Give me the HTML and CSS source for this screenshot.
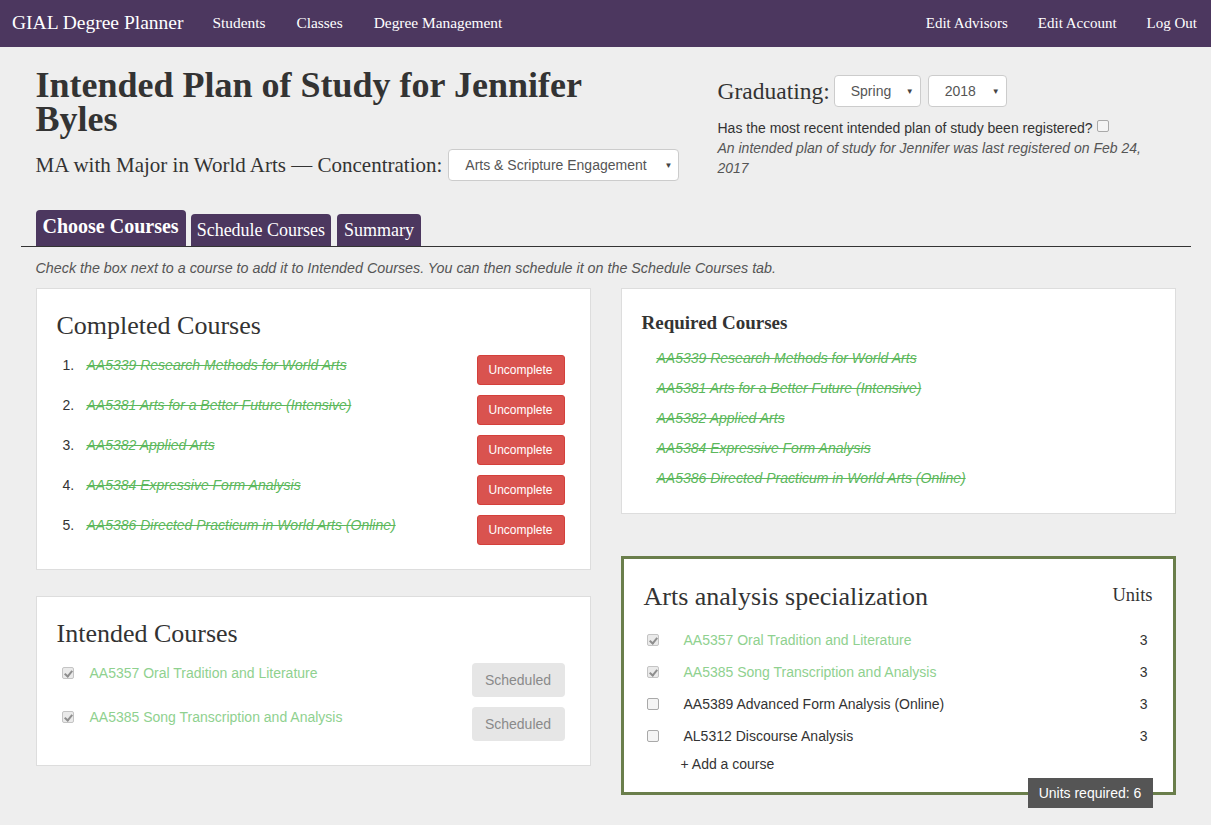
FILE: index.html
```html
<!DOCTYPE html>
<html>
<head>
<meta charset="utf-8">
<link rel="stylesheet" href="styles.css">
</head>
<body>
<nav class="navbar">
  <div class="nav-left">
    <a class="brand">GIAL Degree Planner</a>
    <a class="nav-link">Students</a>
    <a class="nav-link">Classes</a>
    <a class="nav-link">Degree Management</a>
  </div>
  <div class="nav-right">
    <a class="nav-link">Edit Advisors</a>
    <a class="nav-link">Edit Account</a>
    <a class="nav-link">Log Out</a>
  </div>
</nav>

<div class="container">
  <div class="header-row">
    <div class="head-left">
      <h1 class="title">Intended Plan of Study for Jennifer Byles</h1>
      <div class="degree">
        <span class="degree-text">MA with Major in World Arts — Concentration:</span>
        <div class="select select-conc"><span>Arts &amp; Scripture Engagement</span><span class="caret">▼</span></div>
      </div>
    </div>
    <div class="head-right">
      <div class="grad">
        <span class="grad-label">Graduating:</span>
        <div class="select select-term"><span>Spring</span><span class="caret">▼</span></div>
        <div class="select select-year"><span>2018</span><span class="caret">▼</span></div>
      </div>
      <p class="reg-q">Has the most recent intended plan of study been registered? <span class="cb cb-plain cb-inline"></span></p>
      <p class="reg-note">An intended plan of study for Jennifer was last registered on Feb 24, 2017</p>
    </div>
  </div>

  <ul class="tabs">
    <li class="tab active">Choose Courses</li>
    <li class="tab">Schedule Courses</li>
    <li class="tab">Summary</li>
  </ul>

  <p class="instructions">Check the box next to a course to add it to Intended Courses. You can then schedule it on the Schedule Courses tab.</p>

  <div class="main-row">
    <div class="col">
      <section class="panel panel-completed">
        <h2 class="panel-title">Completed Courses</h2>
        <ol class="completed-list">
          <li><span class="num">1.</span><span class="done">AA5339 Research Methods for World Arts</span><button class="btn-red">Uncomplete</button></li>
          <li><span class="num">2.</span><span class="done">AA5381 Arts for a Better Future (Intensive)</span><button class="btn-red">Uncomplete</button></li>
          <li><span class="num">3.</span><span class="done">AA5382 Applied Arts</span><button class="btn-red">Uncomplete</button></li>
          <li><span class="num">4.</span><span class="done">AA5384 Expressive Form Analysis</span><button class="btn-red">Uncomplete</button></li>
          <li><span class="num">5.</span><span class="done">AA5386 Directed Practicum in World Arts (Online)</span><button class="btn-red">Uncomplete</button></li>
        </ol>
      </section>

      <section class="panel panel-intended">
        <h2 class="panel-title">Intended Courses</h2>
        <ul class="intended-list">
          <li><span class="cb cb-checked"></span><span class="planned">AA5357 Oral Tradition and Literature</span><button class="btn-gray">Scheduled</button></li>
          <li><span class="cb cb-checked"></span><span class="planned">AA5385 Song Transcription and Analysis</span><button class="btn-gray">Scheduled</button></li>
        </ul>
      </section>
    </div>

    <div class="col">
      <section class="panel panel-required">
        <h3 class="req-title">Required Courses</h3>
        <ul class="req-list">
          <li class="done">AA5339 Research Methods for World Arts</li>
          <li class="done">AA5381 Arts for a Better Future (Intensive)</li>
          <li class="done">AA5382 Applied Arts</li>
          <li class="done">AA5384 Expressive Form Analysis</li>
          <li class="done">AA5386 Directed Practicum in World Arts (Online)</li>
        </ul>
      </section>

      <section class="panel panel-spec">
        <div class="spec-head">
          <h2 class="panel-title">Arts analysis specialization</h2>
          <span class="units-label">Units</span>
        </div>
        <ul class="spec-list">
          <li><span class="cb cb-checked"></span><span class="planned">AA5357 Oral Tradition and Literature</span><span class="units">3</span></li>
          <li><span class="cb cb-checked"></span><span class="planned">AA5385 Song Transcription and Analysis</span><span class="units">3</span></li>
          <li><span class="cb cb-plain"></span><span class="course">AA5389 Advanced Form Analysis (Online)</span><span class="units">3</span></li>
          <li><span class="cb cb-plain"></span><span class="course">AL5312 Discourse Analysis</span><span class="units">3</span></li>
        </ul>
        <a class="add-course">+ Add a course</a>
        <span class="units-badge">Units required: 6</span>
      </section>
    </div>
  </div>
</div>
</body>
</html>
```

FILE: styles.css
```css
* { box-sizing: border-box; }

body {
  margin: 0;
  background: #eeeeee;
  font-family: "Liberation Sans", Arial, sans-serif;
  font-size: 14px;
  color: #333;
}

.navbar {
  height: 47px;
  background: #4c375f;
  display: flex;
  justify-content: space-between;
  align-items: center;
  padding: 0 14px 1px 12px;
  font-family: "Liberation Serif", Georgia, serif;
  color: #fff;
}
.nav-left, .nav-right { display: flex; align-items: center; }
.brand { font-size: 19.5px; margin-right: 29px; }
.nav-link { font-size: 15.4px; margin-right: 31px; }
.nav-right .nav-link { font-size: 15px; margin-right: 30px; }
.nav-right .nav-link:last-child { margin-right: 0; }

.container {
  width: 1170px;
  margin: 0 auto;
  padding-bottom: 30px;
}

.header-row { display: flex; }
.head-left { width: 682px; padding: 0 15px; }
.head-right { flex: 1; padding: 0 15px; }

.title {
  font-family: "Liberation Serif", Georgia, serif;
  font-size: 36px;
  line-height: 34px;
  font-weight: bold;
  margin: 21px 0 0;
  width: 600px;
  color: #333;
}

.degree {
  display: flex;
  align-items: center;
  margin-top: 13px;
}
.degree-text {
  font-family: "Liberation Serif", Georgia, serif;
  font-size: 21px;
  margin-right: 6px;
}

.select {
  display: flex;
  align-items: center;
  justify-content: space-between;
  height: 32px;
  background: #fff;
  border: 1px solid #ccc;
  border-radius: 4px;
  color: #555;
  font-size: 14px;
  padding: 0 6px 0 16px;
}
.caret { font-size: 8px; color: #444; }
.select-conc { width: 231px; }
.select-term { width: 87px; margin-right: 7px; }
.select-year { width: 79px; }

.grad {
  display: flex;
  align-items: center;
  margin-top: 28px;
}
.grad-label {
  font-family: "Liberation Serif", Georgia, serif;
  font-size: 23.5px;
  margin-right: 4px;
}

.reg-q { margin: 11px 0 0; line-height: 20px; }
.reg-note { margin: 0; font-style: italic; color: #555; line-height: 20px; }

.cb {
  display: inline-block;
  width: 12px;
  height: 12px;
  border: 1px solid #a9a9a9;
  border-radius: 2px;
  background: #f4f4f4;
  position: relative;
  flex: none;
}
.cb-inline { vertical-align: 1px; }
.cb-checked { background: #eaeaea; border-color: #c4c4c4; }
.cb-checked::after {
  content: "";
  position: absolute;
  left: 3px;
  top: 1px;
  width: 3px;
  height: 6px;
  border: solid #8e8e8e;
  border-width: 0 2px 2px 0;
  transform: rotate(40deg);
}

.tabs {
  list-style: none;
  margin: 29px 0 0;
  padding: 0 15px;
  display: flex;
  align-items: flex-end;
  border-bottom: 1px solid #333;
  gap: 5px;
  height: 37px;
}
.tab {
  background: #4c375f;
  color: #fff;
  font-family: "Liberation Serif", Georgia, serif;
  font-size: 18px;
  height: 32px;
  line-height: 32px;
  padding: 0 6px;
  border-radius: 4px 4px 0 0;
}
.tab:last-child { padding: 0 7px; margin-left: 1px; }
.tab.active {
  height: 36px;
  line-height: 32px;
  font-size: 20px;
  font-weight: bold;
  padding: 0 7px;
}

.instructions {
  margin: 13px 15px 0;
  font-size: 14.3px;
  font-style: italic;
  color: #555;
}

.main-row { display: flex; margin-top: 12px; }
.col { width: 585px; padding: 0 15px; }

.panel {
  background: #fff;
  border: 1px solid #ddd;
  position: relative;
}

.panel-title {
  font-family: "Liberation Serif", Georgia, serif;
  font-weight: normal;
  font-size: 26px;
  margin: 0;
  color: #333;
}

.panel-completed { padding: 22px 25px 24px 20px; height: 282px; }
.completed-list { list-style: none; margin: 14px 0 0; padding: 0; }
.completed-list li {
  display: flex;
  align-items: flex-start;
  height: 40px;
  line-height: 20px;
}
.num { width: 30px; padding-left: 6px; color: #333; }
.done {
  color: #5cb85c;
  font-style: italic;
  text-decoration: line-through;
}
.completed-list .done { flex: 1; }
.btn-red {
  background: #d9534f;
  border: 1px solid #d43f3a;
  color: #fff;
  border-radius: 3px;
  font-family: "Liberation Sans", Arial, sans-serif;
  font-size: 12px;
  width: 88px;
  height: 30px;
  padding: 0;
}

.panel-intended { margin-top: 26px; padding: 22px 25px 24px 20px; height: 170px; }
.intended-list { list-style: none; margin: 14px 0 0; padding: 0; }
.intended-list li { display: flex; align-items: flex-start; height: 44px; line-height: 20px; }
.intended-list .cb { margin: 4px 16px 0 5px; }
.intended-list .planned { flex: 1; }
.planned { color: #8fd18f; }
.btn-gray {
  background: #e6e6e6;
  border: none;
  border-radius: 4px;
  color: #8a8a8a;
  font-family: "Liberation Sans", Arial, sans-serif;
  font-size: 14px;
  width: 93px;
  height: 34px;
  padding: 0;
}

.panel-required { padding: 23px 20px 25px 20px; height: 226px; }
.req-title {
  font-family: "Liberation Serif", Georgia, serif;
  font-weight: bold;
  font-size: 19px;
  margin: 0;
  color: #333;
}
.req-list { list-style: none; margin: 14px 0 0; padding: 0 0 0 15px; }
.req-list li { height: 30px; line-height: 20px; }

.panel-spec {
  margin-top: 42px;
  border: 3px solid #6a7e4b;
  padding: 23px 20px 0 20px;
  height: 239px;
}
.spec-head { display: flex; justify-content: space-between; align-items: baseline; }
.units-label {
  font-family: "Liberation Serif", Georgia, serif;
  font-size: 18.5px;
  position: relative;
  top: -4px;
}
.spec-list { list-style: none; margin: 12px 0 0; padding: 0; }
.spec-list li { display: flex; align-items: center; height: 32px; }
.spec-list .cb { margin-left: 3px; margin-right: 25px; }
.spec-list .planned, .spec-list .course { flex: 1; }
.course { color: #333; }
.units { width: 20px; text-align: right; margin-right: 5px; }
.add-course { display: block; margin: 4px 0 0 37px; color: #333; }
.units-badge {
  position: absolute;
  right: 20px;
  bottom: -16px;
  z-index: 1;
  background: #555;
  color: #fff;
  font-size: 14px;
  height: 30px;
  line-height: 30px;
  width: 125px;
  text-align: center;
}
```
